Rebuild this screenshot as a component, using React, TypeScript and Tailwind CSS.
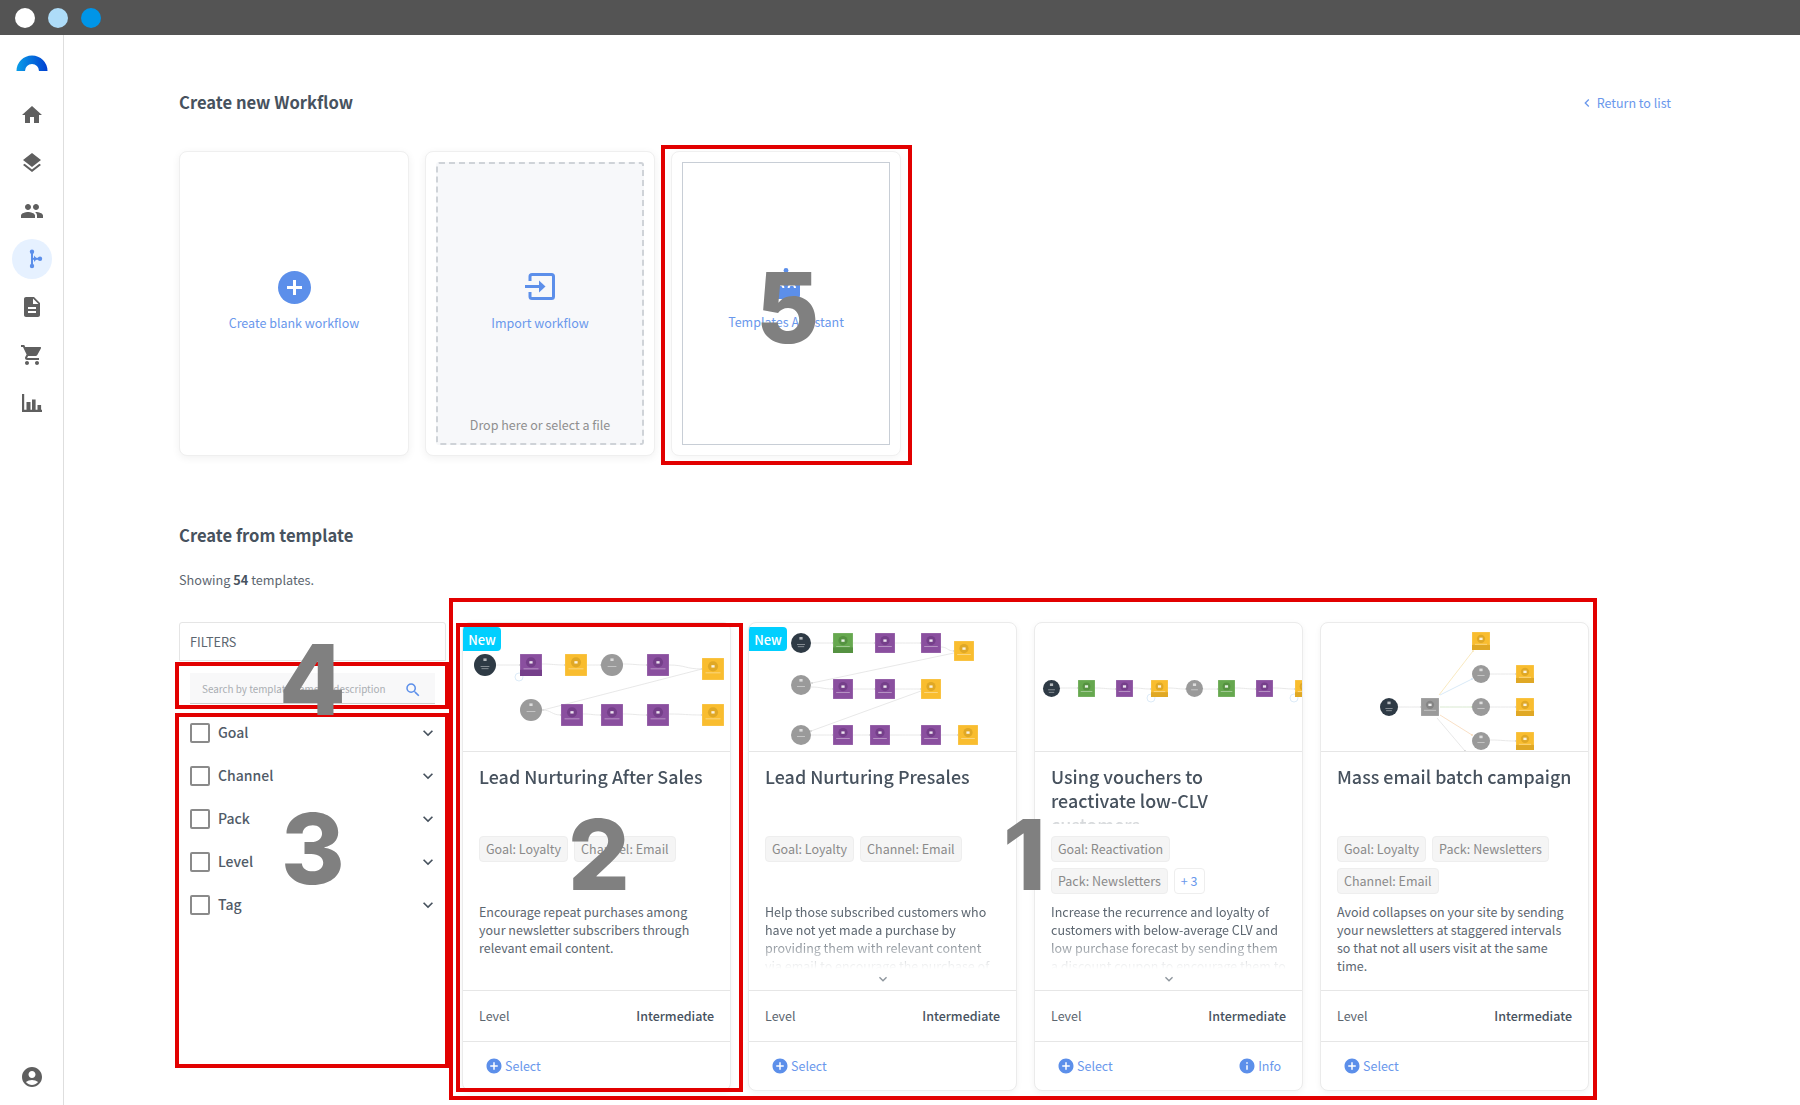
import React from "react";
import {
  MdHome, MdLayers, MdPeople, MdDescription, MdShoppingCart, MdAccountCircle,
  MdAddCircle, MdInfo, MdSearch, MdKeyboardArrowDown, MdChevronLeft,
} from "react-icons/md";

type Kind = "p" | "y" | "g" | "k" | "c" | "d";
type N = { t: Kind; x: number; y: number; s: number; foot?: boolean };
type E = [number, number, number, number, string?];

const FILL: Record<Kind, string> = { p: "#8a4f9f", y: "#f9bd2f", g: "#66a84f", k: "#9a9a9a", c: "#9a9a9a", d: "#2e3a45" };
const DEEP: Record<Kind, string> = { p: "#753f8a", y: "#e0a825", g: "#559241", k: "#858585", c: "#858585", d: "#2e3a45" };

function FlowNode({ n }: { n: N }) {
  const round = n.t === "c" || n.t === "d";
  const cx = n.x + n.s / 2;
  const cy = n.y + n.s / 2;
  if (round) {
    return (
      <g>
        <circle cx={cx} cy={cy} r={n.s / 2} fill={FILL[n.t]} />
        <rect x={cx - 1.6} y={cy - n.s * 0.3} width={3.2} height={2.6} fill="#fff" opacity={0.65} />
        <rect x={cx - n.s * 0.2} y={cy + 1} width={n.s * 0.4} height={0.7} fill="#fff" opacity={0.6} />
        {n.t === "d" && <rect x={cx - n.s * 0.16} y={cy + 3.4} width={n.s * 0.32} height={0.7} fill="#fff" opacity={0.6} />}
      </g>
    );
  }
  return (
    <g>
      <rect x={n.x} y={n.y} width={n.s} height={n.s} fill={FILL[n.t]} stroke="#fff" strokeOpacity={0.4} strokeWidth={0.5} />
      {n.foot && <rect x={n.x} y={n.y + n.s * 0.72} width={n.s} height={n.s * 0.28} fill={DEEP[n.t]} />}
      <circle cx={cx} cy={n.y + n.s * 0.38} r={n.s * 0.23} fill={DEEP[n.t]} />
      <rect x={cx - 1.6} y={n.y + n.s * 0.38 - 1.2} width={3.2} height={2.4} fill="#fff" opacity={0.85} />
      <rect x={n.x + n.s * 0.16} y={n.y + n.s * 0.66} width={n.s * 0.68} height={0.7} fill="#fff" opacity={0.55} />
    </g>
  );
}

function Thumb({ nodes, edges, loops }: { nodes: N[]; edges: E[]; loops?: [number, number][] }) {
  return (
    <svg width="267" height="129" viewBox="0 0 267 129" className="block">
      {edges.map(([a, b, c, d, col], i) => {
        const m = (a + c) / 2;
        const straight = Math.abs(b - d) > 15;
        return (
          <g key={i}>
            <path d={straight ? `M${a} ${b} L${c} ${d}` : `M${a} ${b} C${m} ${b} ${m} ${d} ${c} ${d}`} fill="none" stroke={col || "#e2e2e2"} strokeWidth={0.8} />
            <circle cx={c} cy={d} r={0.9} fill={col || "#cfcfcf"} />
          </g>
        );
      })}
      {loops?.map(([x, y], i) => (
        <circle key={i} cx={x} cy={y} r={4} fill="none" stroke="#cfe3f5" strokeWidth={0.7} />
      ))}
      {nodes.map((n, i) => (
        <FlowNode key={i} n={n} />
      ))}
    </svg>
  );
}

const card1 = {
  nodes: [
    { t: "d", x: 11, y: 31, s: 22 }, { t: "p", x: 57, y: 31, s: 22, foot: true }, { t: "y", x: 102, y: 31, s: 22 },
    { t: "c", x: 138, y: 31, s: 22 }, { t: "p", x: 184, y: 31, s: 22 }, { t: "y", x: 239, y: 35, s: 22 },
    { t: "c", x: 57, y: 76, s: 22 }, { t: "p", x: 98, y: 81, s: 22 }, { t: "p", x: 138, y: 81, s: 22 },
    { t: "p", x: 184, y: 81, s: 22 }, { t: "y", x: 239, y: 81, s: 22 },
  ] as N[],
  edges: [
    [33, 42, 57, 42], [79, 41, 102, 42], [124, 42, 138, 42], [160, 41, 184, 42], [206, 42, 239, 46],
    [239, 46, 80, 87], [79, 87, 98, 92], [120, 91, 138, 92], [160, 91, 184, 92], [206, 91, 239, 92],
  ] as E[],
  loops: [[56, 54]] as [number, number][],
};
const card2 = {
  nodes: [
    { t: "d", x: 42, y: 10, s: 20 }, { t: "g", x: 84, y: 10, s: 20, foot: true }, { t: "p", x: 126, y: 10, s: 20 },
    { t: "p", x: 172, y: 10, s: 20 }, { t: "y", x: 205, y: 18, s: 20 }, { t: "c", x: 42, y: 52, s: 20 },
    { t: "p", x: 84, y: 56, s: 20 }, { t: "p", x: 126, y: 56, s: 20 }, { t: "y", x: 172, y: 56, s: 20 },
    { t: "c", x: 42, y: 102, s: 20 }, { t: "p", x: 84, y: 102, s: 20 }, { t: "p", x: 121, y: 102, s: 20 },
    { t: "p", x: 172, y: 102, s: 20 }, { t: "y", x: 209, y: 102, s: 20 },
  ] as N[],
  edges: [
    [62, 20, 84, 20], [104, 20, 126, 20], [146, 20, 172, 20], [192, 24, 205, 28], [205, 30, 63, 60],
    [62, 64, 84, 66], [104, 66, 126, 66], [146, 66, 172, 66], [172, 68, 62, 108],
    [62, 112, 84, 112], [104, 112, 121, 112], [141, 112, 172, 112], [192, 112, 209, 112],
  ] as E[],
};
const card3 = {
  nodes: [
    { t: "d", x: 8, y: 57, s: 17 }, { t: "g", x: 43, y: 57, s: 17 }, { t: "p", x: 81, y: 57, s: 17 },
    { t: "y", x: 116, y: 57, s: 17, foot: true }, { t: "c", x: 151, y: 57, s: 17 }, { t: "g", x: 183, y: 57, s: 17 },
    { t: "p", x: 221, y: 57, s: 17 }, { t: "y", x: 260, y: 57, s: 17, foot: true },
  ] as N[],
  edges: [
    [25, 65, 43, 65], [60, 65, 81, 66], [98, 65, 116, 66], [133, 65, 151, 66], [168, 66, 183, 66],
    [200, 65, 221, 66], [238, 65, 260, 66],
  ] as E[],
  loops: [[116, 75], [259, 75]] as [number, number][],
};
const card4 = {
  nodes: [
    { t: "d", x: 59, y: 75, s: 18 }, { t: "k", x: 100, y: 75, s: 18 }, { t: "y", x: 151, y: 9, s: 18, foot: true },
    { t: "c", x: 151, y: 42, s: 18 }, { t: "y", x: 195, y: 42, s: 18, foot: true }, { t: "c", x: 151, y: 75, s: 18 },
    { t: "y", x: 195, y: 75, s: 18, foot: true }, { t: "c", x: 151, y: 109, s: 18 }, { t: "y", x: 195, y: 109, s: 18, foot: true },
  ] as N[],
  edges: [
    [77, 84, 100, 84], [118, 72, 152, 28, "#f7e3b0"], [119, 72, 151, 56, "#cfe3f5"], [119, 84, 151, 84, "#cfe3c4"],
    [119, 92, 151, 112, "#f7d8b8"], [116, 95, 144, 128], [169, 51, 195, 51], [169, 84, 195, 84], [169, 117, 195, 118],
  ] as E[],
};

function Tag({ children, more }: { children: React.ReactNode; more?: boolean }) {
  return (
    <span className={more
      ? "h-[26px] flex items-center px-[6px] rounded-[4px] border border-[#eeeeee] bg-white text-[#6a98ec] text-[12.5px] leading-none"
      : "h-[26px] flex items-center px-[6px] rounded-[4px] border border-[#eeeeee] bg-[#f5f5f5] text-[#8a8a8a] text-[12.5px] leading-none whitespace-nowrap"}>
      {children}
    </span>
  );
}

function TemplateCard({ thumb, isNew, title, tags, desc, clamp, info, more }: {
  thumb: { nodes: N[]; edges: E[]; loops?: [number, number][] };
  isNew?: boolean; title: string; tags: string[]; desc: string; clamp?: boolean; info?: boolean; more?: boolean;
}) {
  return (
    <div className="relative w-[269px] h-[469px] flex flex-col rounded-[8px] border border-[#ebebeb] bg-white shadow-[0_2px_6px_rgba(0,0,0,0.05)] overflow-hidden">
      {isNew && (
        <span className="absolute left-0 top-[4px] w-[38px] h-[24px] flex items-center justify-center bg-[#00cfff] text-white text-[13px] font-medium rounded-r-[4px] leading-none">New</span>
      )}
      <div className="h-[129px] border-b border-[#e6e6e6] overflow-hidden shrink-0">
        <Thumb {...thumb} />
      </div>
      <div className="h-[239px] px-4 pt-[12px] flex flex-col border-b border-[#e6e6e6] shrink-0">
        <div className="h-[60px] -mr-[8px] overflow-hidden text-[17.9px] leading-[24px] font-medium text-[#47525e] [mask-image:linear-gradient(to_bottom,black_80%,rgba(0,0,0,0.3)_82%,rgba(0,0,0,0.2)_100%)]">{clamp && info ? <span className="block max-w-[215px]">{title}</span> : title}</div>
        <div className="h-[67px] mt-[12px] flex flex-wrap content-start gap-x-[6px] gap-y-[6px]">
          {tags.map((t) => <Tag key={t}>{t}</Tag>)}
          {more && <Tag more>+ 3</Tag>}
        </div>
        {clamp ? (
          <>
            <div className="h-[66px] overflow-hidden text-[12.5px] leading-[18px] text-[#5c6670] [mask-image:linear-gradient(to_bottom,black_50%,rgba(0,0,0,0.12)_92%,transparent_100%)]">{desc}</div>
            <div className="flex justify-center pt-[2px] text-[#8d959c]"><MdKeyboardArrowDown size={16} /></div>
          </>
        ) : (
          <div className="text-[12.5px] leading-[18px] text-[#5c6670]">{desc}</div>
        )}
      </div>
      <div className="h-[51px] px-4 flex items-center justify-between border-b border-[#e6e6e6] text-[12.5px] shrink-0">
        <span className="text-[#5c6670]">Level</span>
        <span className="font-medium text-[#47525e]">Intermediate</span>
      </div>
      <div className="flex-1 pl-[22px] pr-[21px] flex items-center justify-between text-[12.5px] text-[#6a98ec]">
        <span className="flex items-center gap-[2px]"><MdAddCircle size={18} className="text-[#5c8fea]" />Select</span>
        {info && <span className="flex items-center gap-[2px]"><MdInfo size={18} className="text-[#5c8fea]" />Info</span>}
      </div>
    </div>
  );
}

function Red({ c }: { c: string }) {
  return <div className={c} />;
}

const digit = "absolute font-['Inter',sans-serif] font-extrabold text-[97px] leading-none text-[#808080]";

export default function App() {
  return (
    <div className="relative w-[1800px] h-[1105px] overflow-hidden flex flex-col bg-white font-['Noto_Sans_CJK_SC','Noto_Sans',sans-serif]">
      <div className="h-[35px] bg-[#545454] flex items-center pl-[15px] gap-[13px] shrink-0">
        <span className="w-5 h-5 rounded-full bg-white" />
        <span className="w-5 h-5 rounded-full bg-[#aedcf8]" />
        <span className="w-5 h-5 rounded-full bg-[#0095e8]" />
      </div>
      <div className="flex flex-1 min-h-0">
        <aside className="w-[64px] shrink-0 border-r border-[#dedede] flex flex-col items-center text-[#5f5f5f] pb-[16px]">
          <svg width="32" height="16" viewBox="0 0 32 16" className="mt-[20px] mb-[20px] ml-[1px]">
            <defs>
              <linearGradient id="lg" x1="0" y1="0" x2="1" y2="0">
                <stop offset="0" stopColor="#0a9ee8" />
                <stop offset="1" stopColor="#003fd1" />
              </linearGradient>
            </defs>
            <path d="M0.5 16A15.5 15.5 0 0 1 31.5 16L23 16A7 7 0 0 0 9 16Z" fill="url(#lg)" />
          </svg>
          <div className="h-12 flex items-center justify-center"><MdHome size={24} /></div>
          <div className="h-12 flex items-center justify-center"><MdLayers size={24} /></div>
          <div className="h-12 flex items-center justify-center"><MdPeople size={24} /></div>
          <div className="h-12 flex items-center justify-center">
            <span className="w-10 h-10 rounded-full bg-[#e6f1ff] flex items-center justify-center">
              <svg width="24" height="24" viewBox="0 0 24 24" fill="#5c8fea">
                <circle cx="12" cy="4.7" r="2.2" /><circle cx="12" cy="19" r="2.2" /><circle cx="20" cy="11.8" r="2.2" />
                <rect x="11" y="4.7" width="2" height="14" /><rect x="12" y="10.8" width="8" height="2" />
                <path d="M14 8.5l3 3.3-3 3.3z" />
              </svg>
            </span>
          </div>
          <div className="h-12 flex items-center justify-center"><MdDescription size={24} /></div>
          <div className="h-12 flex items-center justify-center"><MdShoppingCart size={24} /></div>
          <div className="h-12 flex items-center justify-center">
            <svg width="24" height="24" viewBox="0 0 24 24" fill="#5f5f5f">
              <path d="M2 3h2.2v15.8H22V21H2z" />
              <rect x="6.5" y="11" width="4" height="8" /><rect x="12" y="8.5" width="3.6" height="10.5" /><rect x="17.5" y="14" width="3.6" height="5" />
            </svg>
          </div>
          <div className="mt-auto"><MdAccountCircle size={24} /></div>
        </aside>

        <main className="flex-1 min-w-0 pl-[115px] pr-[129px] pt-[55px]">
          <div className="flex items-center justify-between h-6">
            <h1 className="text-[16.6px] leading-6 font-bold text-[#47525e]">Create new Workflow</h1>
            <span className="mt-[2px] flex items-center text-[12.5px] text-[#6a98ec] leading-none"><MdChevronLeft size={16} className="mr-[2px]" />Return to list</span>
          </div>

          <div className="mt-[37px] flex gap-4 h-[305px]">
            <div className="w-[230px] rounded-[8px] border border-[#efefef] bg-white shadow-[0_2px_8px_rgba(0,0,0,0.06)] flex flex-col items-center pt-[119px] text-[#6a98ec] text-[12.5px]">
              <svg width="33" height="33" viewBox="0 0 33 33"><circle cx="16.5" cy="16.5" r="16.5" fill="#5c8fea" /><rect x="9" y="15" width="15" height="3" fill="#fff" /><rect x="15" y="9" width="3" height="15" fill="#fff" /></svg>
              <span className="mt-[9px] leading-5">Create blank workflow</span>
            </div>
            <div className="w-[230px] rounded-[8px] border border-[#efefef] bg-white shadow-[0_2px_8px_rgba(0,0,0,0.06)] p-[10px]">
              <div className="h-full rounded-[3px] border-2 border-dashed border-[#cfd3d8] bg-[#f7f8fa] flex flex-col items-center pt-[109px] text-[12.5px]">
                <svg width="30" height="27" viewBox="0 0 30 27" fill="none" stroke="#5c8fea" strokeWidth="3">
                  <path d="M5 8V3.5A2 2 0 0 1 7 1.5H26.5A2 2 0 0 1 28.5 3.5V23.5A2 2 0 0 1 26.5 25.5H7A2 2 0 0 1 5 23.5V19" />
                  <path d="M0 13.5H15" />
                  <path d="M14 7.5L20.5 13.5L14 19.5Z" fill="#5c8fea" stroke="none" />
                </svg>
                <span className="mt-[13px] leading-5 text-[#6a98ec]">Import workflow</span>
                <span className="mt-auto mb-[8px] leading-5 text-[#8f8f8f]">Drop here or select a file</span>
              </div>
            </div>
            <div className="w-[230px] rounded-[8px] border border-[#f0f0f0] bg-white shadow-[0_2px_8px_rgba(0,0,0,0.04)] p-[10px]">
              <div className="h-full border border-[#c8ced6] flex flex-col items-center pt-[105px] text-[12.5px] text-[#6a98ec]">
                <svg width="32" height="32" viewBox="0 0 32 32" fill="#5c8fea">
                  <circle cx="16" cy="2.5" r="2.4" /><rect x="15" y="3" width="2" height="10" />
                  <rect x="2" y="12" width="28" height="19" rx="4" />
                  <path d="M7 20a3.2 3.2 0 0 1 6.4 0M18.6 20a3.2 3.2 0 0 1 6.4 0" stroke="#fff" strokeWidth="2" fill="none" />
                </svg>
                <span className="mt-[12px] leading-5">Templates Assistant</span>
              </div>
            </div>
          </div>

          <h2 className="mt-[67px] text-[16.6px] leading-6 font-bold text-[#47525e]">Create from template</h2>
          <p className="mt-[23px] text-[12.7px] leading-5 text-[#5c6670]">Showing <b className="font-bold text-[#47525e]">54</b> templates.</p>

          <div className="mt-[32px] flex gap-4">
            <div className="w-[267px] shrink-0">
              <div className="h-[39px] border border-[#e5e5e5] rounded-t-[3px] flex items-center pl-[10px] text-[12.7px] text-[#5c6670]">FILTERS</div>
              <div className="mx-[11px] mt-[12px] h-[31px] pt-[3px] bg-[#f8f8f9] border-b border-[#cccccc] flex items-center justify-between pl-[12px] pr-[13px] text-[9.9px] text-[#a9adb2]">
                <span className="whitespace-nowrap">Search by template name or description</span>
                <MdSearch size={18} className="text-[#5c8fea]" />
              </div>
              <div className="mt-[7px] pl-[11px] pr-[8px]">
                {["Goal", "Channel", "Pack", "Level", "Tag"].map((l) => (
                  <div key={l} className="h-[43px] flex items-center">
                    <span className="w-5 h-5 rounded-[2px] border-2 border-[#8a8a8a] mr-[8px]" />
                    <span className="flex-1 text-[14px] font-medium text-[#515b67]">{l}</span>
                    <MdKeyboardArrowDown size={20} className="text-[#47525e]" />
                  </div>
                ))}
              </div>
            </div>
            <div className="flex gap-[17px]">
              <TemplateCard thumb={card1} isNew title="Lead Nurturing After Sales" tags={["Goal: Loyalty", "Channel: Email"]}
                desc="Encourage repeat purchases among your newsletter subscribers through relevant email content." />
              <TemplateCard thumb={card2} isNew title="Lead Nurturing Presales" tags={["Goal: Loyalty", "Channel: Email"]} clamp
                desc="Help those subscribed customers who have not yet made a purchase by providing them with relevant content via email to encourage the purchase of" />
              <TemplateCard thumb={card3} title="Using vouchers to reactivate low-CLV customers" tags={["Goal: Reactivation", "Pack: Newsletters"]} more clamp info
                desc="Increase the recurrence and loyalty of customers with below-average CLV and low purchase forecast by sending them a discount coupon to encourage them to" />
              <TemplateCard thumb={card4} title="Mass email batch campaign" tags={["Goal: Loyalty", "Pack: Newsletters", "Channel: Email"]}
                desc="Avoid collapses on your site by sending your newsletters at staggered intervals so that not all users visit at the same time." />
            </div>
          </div>
        </main>
      </div>

      <Red c="absolute left-[661px] top-[145px] w-[251px] h-[320px] border-4 border-[#e20000]" />
      <Red c="absolute left-[449px] top-[598px] w-[1148px] h-[502px] border-4 border-[#e20000]" />
      <Red c="absolute left-[456px] top-[623px] w-[287px] h-[469px] border-4 border-[#e20000]" />
      <Red c="absolute left-[175px] top-[662px] w-[274px] h-[47px] border-4 border-[#e20000]" />
      <Red c="absolute left-[175px] top-[713px] w-[274px] h-[355px] border-4 border-[#e20000]" />

      <span className={`${digit} left-[756px] top-[259px]`}>5</span>
      <span className={`${digit} left-[279px] top-[631px]`}>4</span>
      <span className={`${digit} left-[281px] top-[800px]`}>3</span>
      <span className={`${digit} left-[568px] top-[806px]`}>2</span>
      <span className={`${digit} left-[1003px] top-[806px]`}>1</span>
    </div>
  );
}
